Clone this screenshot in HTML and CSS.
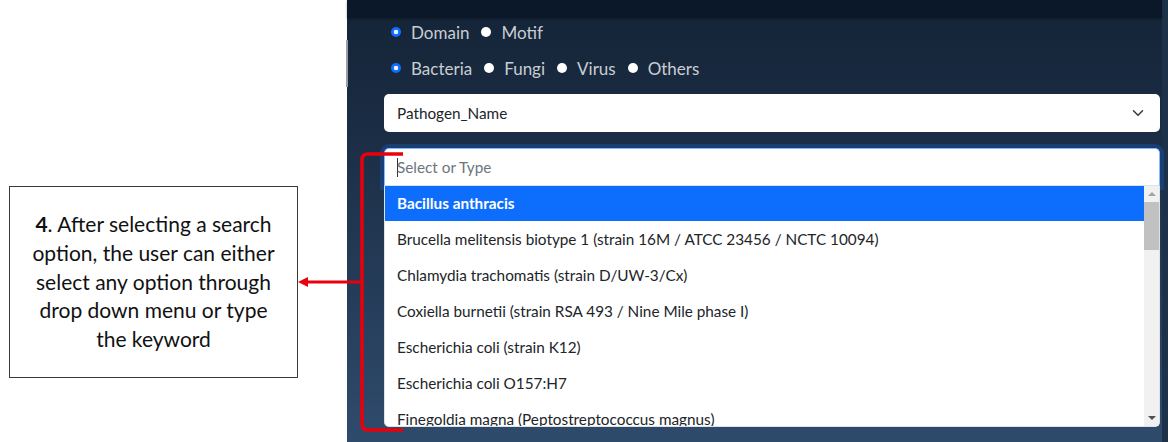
FILE: index.html
```html
<!DOCTYPE html>
<html>
<head>
<meta charset="utf-8">
<title>Pathogen search</title>
<link rel="stylesheet" href="styles.css">
</head>
<body>
<div class="page">
  <aside class="notes">
    <div class="note-box">
      <p><b>4</b>. After selecting a search<br>option, the user can either<br>select any option through<br>drop down menu or type<br>the keyword</p>
    </div>
  </aside>
  <main class="panel">
    <div class="topbar"></div>
    <div class="gutter-bar"></div>
    <div class="content">
      <div class="radio-row first">
        <label class="radio"><span class="dot checked"></span>Domain</label>
        <label class="radio"><span class="dot"></span>Motif</label>
      </div>
      <div class="radio-row">
        <label class="radio"><span class="dot checked"></span>Bacteria</label>
        <label class="radio"><span class="dot"></span>Fungi</label>
        <label class="radio"><span class="dot"></span>Virus</label>
        <label class="radio"><span class="dot"></span>Others</label>
      </div>
      <div class="select">
        <span>Pathogen_Name</span>
        <svg class="chev" width="16" height="12" viewBox="0 0 16 16"><path d="M2 5l6 6 6-6" fill="none" stroke="#343a40" stroke-width="2" stroke-linecap="round" stroke-linejoin="round"/></svg>
      </div>
      <div class="combo">
        <div class="search"><span class="caret"></span><span class="placeholder">Select or Type</span></div>
        <div class="listbox">
          <ul class="options">
            <li class="active">Bacillus anthracis</li>
            <li>Brucella melitensis biotype 1 (strain 16M / ATCC 23456 / NCTC 10094)</li>
            <li>Chlamydia trachomatis (strain D/UW-3/Cx)</li>
            <li>Coxiella burnetii (strain RSA 493 / Nine Mile phase I)</li>
            <li>Escherichia coli (strain K12)</li>
            <li>Escherichia coli O157:H7</li>
            <li class="last">Finegoldia magna (Peptostreptococcus magnus)</li>
          </ul>
          <div class="scrollbar">
            <div class="sb-btn"><span class="tri up"></span></div>
            <div class="sb-track"><div class="sb-thumb"></div></div>
            <div class="sb-btn"><span class="tri down"></span></div>
          </div>
        </div>
      </div>
    </div>
  </main>
</div>
<svg class="annot" width="1168" height="442" viewBox="0 0 1168 442">
  <path d="M403 154 H368 Q362 154 362 160 V424 Q362 430 368 430 H403" fill="none" stroke="#e8000c" stroke-width="3.5" stroke-linejoin="round"/>
  <path d="M362 282 H306" fill="none" stroke="#e8000c" stroke-width="3"/>
  <polygon points="298,282 308,277 308,287" fill="#e8000c"/>
</svg>
</body>
</html>
```
FILE: styles.css
```css
* { box-sizing: border-box; }
html, body { margin: 0; padding: 0; }
body {
  width: 1168px;
  height: 442px;
  overflow: hidden;
  position: relative;
  background: #fff;
  font-family: Lato, "Open Sans", sans-serif;
}
.page { display: flex; height: 442px; }

.notes {
  width: 347px;
  flex: none;
  padding: 186px 0 0 9px;
  background: #fff;
}
.note-box {
  width: 289px;
  height: 192px;
  border: 1.5px solid #3a3a3a;
  display: flex;
  align-items: center;
  justify-content: center;
}
.note-box p {
  margin: 0;
  text-align: center;
  font-size: 21px;
  line-height: 28.7px;
  color: #111;
}

.panel {
  flex: 1;
  position: relative;
  background: linear-gradient(180deg, #142437 0px, #1a2c43 120px, #2f4b6c 442px);
  border-right: 6px solid #1d3149;
}
.topbar {
  height: 18px;
  background: #0a1829;
  box-shadow: 0 1px 2px rgba(0, 0, 0, 0.35);
}
.gutter-bar {
  position: absolute;
  left: -1px;
  top: 40px;
  width: 2px;
  height: 47px;
  background: #9a9ea4;
}
.content { padding: 2px 2px 0 37px; }

.radio-row {
  display: flex;
  align-items: center;
  height: 24px;
  margin-top: 12px;
}
.radio-row.first { margin-top: 0; }
.radio {
  display: flex;
  align-items: center;
  color: #c9cdd2;
  font-size: 17px;
  margin-right: 5px;
}
.dot {
  width: 10px;
  height: 10px;
  border-radius: 50%;
  background: #fff;
  margin: 0 10px 0 7px;
}
.dot.checked {
  background: radial-gradient(circle, #eaf2ff 0 2px, #0d6efd 2.6px);
}

.select {
  margin-top: 14px;
  height: 38px;
  background: #fff;
  border-radius: 5px;
  padding: 0 12px 0 13px;
  display: flex;
  align-items: center;
  justify-content: space-between;
  font-size: 15.3px;
  color: #212529;
}
.chev { display: block; margin-right: 2px; }

.combo { margin-top: 16px; }
.search {
  height: 38px;
  background: #fff;
  border: 1px solid #86b7fe;
  border-bottom-color: #dee2e6;
  border-radius: 5px 5px 0 0;
  box-shadow: 0 0 0 4px rgba(13, 110, 253, 0.25);
  padding: 0 12px;
  display: flex;
  align-items: center;
  font-size: 15.3px;
}
.caret {
  width: 1px;
  height: 19px;
  background: #333;
  margin-right: -1px;
}
.placeholder { color: #6c757d; }

.listbox {
  display: flex;
  height: 241px;
  background: #fff;
  border: 1px solid #dee2e6;
  border-top: 0;
  border-radius: 0 0 5px 5px;
  overflow: hidden;
}
.options {
  flex: 1;
  min-width: 0;
  list-style: none;
  margin: 0;
  padding: 0;
  overflow: hidden;
}
.options li {
  padding: 6px 12px;
  line-height: 24px;
  font-size: 15.3px;
  color: #212529;
  white-space: nowrap;
}
.options li.active {
  background: #0d6efd;
  color: #fff;
  font-weight: 700;
  padding-top: 5px;
}

.scrollbar {
  width: 15px;
  flex: none;
  display: flex;
  flex-direction: column;
  background: #f1f1f1;
}
.sb-btn {
  height: 16px;
  flex: none;
  display: flex;
  align-items: center;
  justify-content: center;
}
.sb-track { flex: 1; }
.sb-thumb {
  height: 48px;
  background: #c1c1c1;
}
.tri {
  width: 0;
  height: 0;
  border-left: 4px solid transparent;
  border-right: 4px solid transparent;
}
.tri.up { border-bottom: 4px solid #a3a3a3; }
.tri.down { border-top: 4px solid #505050; }

.annot {
  position: absolute;
  left: 0;
  top: 0;
  pointer-events: none;
}
```
